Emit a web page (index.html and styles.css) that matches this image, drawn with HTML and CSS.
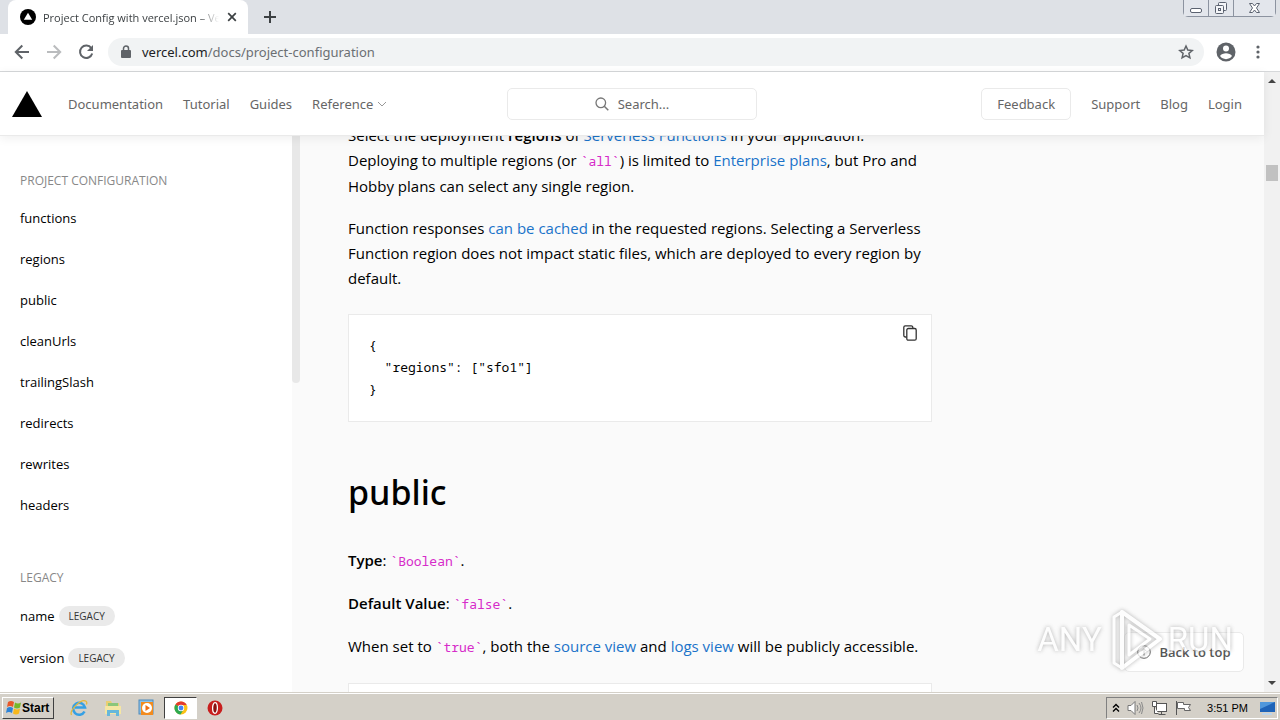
FILE: index.html
```html
<!DOCTYPE html>
<html lang="en">
<head>
<meta charset="utf-8">
<title>Project Config with vercel.json – Vercel</title>
<link rel="stylesheet" href="styles.css">
</head>
<body>
<div class="tabstrip">
  <div class="tab">
    <svg width="16" height="16" viewBox="0 0 16 16"><circle cx="8" cy="8" r="8"/><path d="M8 3.800l4.200 7H3.800z" fill="#fff"/></svg>
    <span class="tab-title">Project Config with vercel.json – Vercel</span>
    <button class="plain" aria-label="Close tab"><svg width="10" height="10" viewBox="0 0 10 10"><path d="M1.200 1.200l7.600 7.600M8.800 1.200L1.200 8.800" stroke="#3c4043" stroke-width="1.700"/></svg></button>
  </div>
  <button class="plain new-tab" aria-label="New tab"><svg width="12" height="12" viewBox="0 0 12 12"><path d="M6 0v12M0 6h12" stroke="#3c4043" stroke-width="2"/></svg></button>
  <div class="window-buttons">
    <button aria-label="Minimize"><svg width="24" height="16" viewBox="0 0 24 16"><rect x="6.500" y="8.500" width="11" height="4" rx="1.500" fill="#fff" stroke="#5b6270"/></svg></button>
    <button aria-label="Restore"><svg width="24" height="16" viewBox="0 0 24 16"><g fill="#f4f5f8" stroke="#5b6270"><rect x="9.500" y="2.500" width="8" height="8" rx="1"/><rect x="6.500" y="5.500" width="8" height="8" rx="1"/><rect x="9.500" y="8.500" width="2" height="2"/></g></svg></button>
    <button aria-label="Close"><svg width="41" height="16" viewBox="0 0 41 16"><path d="M15.500 3.500h3l2 2.500 2-2.500h3L22.500 8l3 4.500h-3l-2-2.500-2 2.500h-3l3-4.500z" fill="#fff" stroke="#5b6270"/></svg></button>
  </div>
</div>

<div class="toolbar">
  <div class="nav-buttons">
    <button class="plain" aria-label="Back"><svg width="16" height="16" viewBox="0 0 16 16"><path d="M15 8H2M8.300 1.500L1.800 8l6.500 6.500" fill="none" stroke="#5f6368" stroke-width="2"/></svg></button>
    <button class="plain" aria-label="Forward"><svg width="16" height="16" viewBox="0 0 16 16"><path d="M1 8h13M7.700 1.500L14.200 8l-6.500 6.500" fill="none" stroke="#babcbe" stroke-width="2"/></svg></button>
    <button class="plain" aria-label="Reload"><svg width="16" height="16" viewBox="0 0 16 16"><path d="M13.300 4.200A6.200 6.200 0 1 0 14.200 9.500" fill="none" stroke="#5f6368" stroke-width="2"/><path d="M15 1v6H9z" fill="#5f6368"/></svg></button>
  </div>
  <div class="address">
    <svg width="10" height="14" viewBox="0 0 10 14"><rect y="5" width="10" height="8" rx="1" fill="#5f6368"/><path d="M2.500 5.500V3.500a2.500 2.500 0 0 1 5 0v2" fill="none" stroke="#5f6368" stroke-width="1.500"/></svg>
    <span class="url">vercel.com<span class="path">/docs/project-configuration</span></span>
    <button class="plain" aria-label="Bookmark"><svg width="16" height="16" viewBox="0 0 16 16"><path d="M8 2l1.800 4.100 4.500.4-3.400 2.900 1 4.400L8 11.500l-3.900 2.300 1-4.400L1.700 6.500l4.500-.4z" fill="none" stroke="#5f6368" stroke-width="1.500"/></svg></button>
  </div>
  <button class="plain" aria-label="Profile"><svg width="20" height="20" viewBox="0 0 20 20"><circle cx="10" cy="10" r="9.500" fill="#5f6368"/><circle cx="10" cy="6.500" r="3" fill="#fff"/><path d="M4 14c1-2 3.700-2.800 6-2.800s5 .8 6 2.800a7.300 7.300 0 0 1-12 0z" fill="#fff"/></svg></button>
  <button class="plain menu" aria-label="Menu"><svg width="4" height="14" viewBox="0 0 4 14" fill="#5f6368"><circle cx="2" cy="2" r="1.600"/><circle cx="2" cy="7" r="1.600"/><circle cx="2" cy="12" r="1.600"/></svg></button>
</div>

<div class="viewport">
  <div class="page">
    <header class="site-header">
      <nav class="links">
        <a class="logo" href="#" aria-label="Home"><svg width="30" height="26" viewBox="0 0 30 26"><path d="M15 0l15 26H0z"/></svg></a>
        <a href="#">Documentation</a><a href="#">Tutorial</a><a href="#">Guides</a>
        <a class="drop" href="#">Reference <svg width="10" height="6" viewBox="0 0 10 6"><path d="M1 1l4 4 4-4" fill="none" stroke="#999"/></svg></a>
      </nav>
      <button class="search"><svg width="14" height="14" viewBox="0 0 14 14"><circle cx="5.800" cy="5.800" r="4.800" fill="none" stroke="#777" stroke-width="1.300"/><path d="M9.300 9.300l4 4" stroke="#777" stroke-width="1.500"/></svg>Search...</button>
      <nav class="links right">
        <button class="feedback">Feedback</button>
        <a href="#">Support</a><a href="#">Blog</a><a href="#">Login</a>
      </nav>
    </header>
    <div class="columns">
      <aside class="sidebar">
        <nav class="side-nav">
          <h2>PROJECT CONFIGURATION</h2>
          <a href="#">functions</a><a href="#">regions</a><a href="#">public</a><a href="#">cleanUrls</a><a href="#">trailingSlash</a><a href="#">redirects</a><a href="#">rewrites</a><a href="#">headers</a>
          <h2 class="second">LEGACY</h2>
          <a class="tagged" href="#">name <span class="tag">LEGACY</span></a>
          <a class="tagged" href="#">version <span class="tag">LEGACY</span></a>
        </nav>
        <div class="side-scroll"></div>
      </aside>
      <main class="article">
        <p>Select the deployment <b>regions</b> of <a href="#">Serverless Functions</a> in your application.<br>Deploying to multiple regions (or <code>`all`</code>) is limited to <a href="#">Enterprise plans</a>, but Pro and<br>Hobby plans can select any single region.</p>
        <p>Function responses <a href="#">can be cached</a> in the requested regions. Selecting a Serverless<br>Function region does not impact static files, which are deployed to every region by<br>default.</p>
        <div class="code-block">
          <pre>{
  "regions": ["sfo1"]
}</pre>
          <button class="plain" aria-label="Copy"><svg width="14" height="16" viewBox="0 0 14 16" fill="none" stroke="#333" stroke-width="1.300"><path d="M3.500 12H2.200A1.500 1.500 0 0 1 .8 10.500V2.200A1.500 1.500 0 0 1 2.200.8h6A1.500 1.500 0 0 1 9.800 2.200V3"/><rect x="3.800" y="3.500" width="9.400" height="11.700" rx="1.500"/></svg></button>
        </div>
        <h1>public</h1>
        <p><b>Type</b>: <code>`Boolean`</code>.</p>
        <p><b>Default Value</b>: <code>`false`</code>.</p>
        <p>When set to <code>`true`</code>, both the <a href="#">source view</a> and <a href="#">logs view</a> will be publicly accessible.</p>
        <div class="code-block"><pre>{
  "public": true
}</pre></div>
      </main>
    </div>
    <button class="to-top"><svg width="14" height="14" viewBox="0 0 14 14" fill="none" stroke="#666"><circle cx="7" cy="7" r="6.300"/><path d="M7 10.500V4M4.500 6.300L7 3.800l2.500 2.500"/></svg>Back to top</button>
    <div class="watermark"><span>ANY</span><svg width="58" height="64" viewBox="0 0 58 64" fill="none" stroke="#fff" stroke-width="4" stroke-linejoin="round"><path d="M16 4v56l38-29z"/><path d="M16 4L8 9v46l8 5M23 17v30l21-16z" stroke-width="3"/></svg><span>RUN</span></div>
  </div>
  <div class="scrollbar">
    <svg width="8" height="4" viewBox="0 0 8 4"><path d="M0 4l4-4 4 4z" fill="#444"/></svg>
    <div class="thumb"></div>
    <svg class="down" width="8" height="4" viewBox="0 0 8 4"><path d="M0 0l4 4 4-4z" fill="#444"/></svg>
  </div>
</div>

<footer class="taskbar">
  <button class="start"><svg width="17" height="16" viewBox="0 0 17 16"><path d="M3 2q3-2 6 0L8 7Q5 5 2 7z" fill="#e8582a"/><path d="M10 2.500q3 2 6 0L15 7.500q-3 2-6 0z" fill="#76b82a"/><path d="M2 8q3-2 6 0l-1 5q-3-2-6 0z" fill="#2c83d8"/><path d="M9 8.500q3 2 6 0l-1 5q-3 2-6 0z" fill="#f7b81c"/></svg>Start</button>
  <div class="apps">
    <button class="plain" aria-label="Internet Explorer"><svg width="18" height="18" viewBox="0 0 18 18" fill="none"><path d="M14.500 12.500A6 6 0 1 1 15 8.500H5" stroke="#35a0e4" stroke-width="2.600"/><path d="M1.500 16C-1 12 11-1 16 2.200c1.500 1 .5 3 .3 3.300" stroke="#e5b83b" stroke-width="1.300"/></svg></button>
    <button class="plain" aria-label="Explorer"><svg width="18" height="18" viewBox="0 0 18 18"><path d="M2 2h5l1 2h7v11H2z" fill="#e9cf72"/><path d="M4 4h10v5H4z" fill="#8bc67b"/><path d="M1 7h16v8H1z" fill="#f5e6a3"/><path d="M3 17v-6h12v6h-3v-3H6v3z" fill="#67b7db"/></svg></button>
    <button class="plain" aria-label="Media Player"><svg width="18" height="18" viewBox="0 0 18 18"><rect x="1" y="1" width="14" height="14" fill="#8ac1e8" stroke="#4c8abc"/><rect x="3" y="3" width="12" height="13" fill="#f28b1e"/><circle cx="9" cy="9" r="5" fill="#fff"/><path d="M7.500 6l4.500 3-4.500 3z" fill="#ed6f14"/></svg></button>
    <button class="plain active" aria-label="Chrome"><svg width="14" height="14" viewBox="0 0 14 14"><circle cx="7" cy="7" r="6.500" fill="#fbc116"/><path d="M7 7L1.400 3.600A6.500 6.500 0 0 1 12.700 4H7z" fill="#e33b2e"/><path d="M7 7L1.400 3.600A6.500 6.500 0 0 0 6.500 13.500L9.600 8.500z" fill="#2da94f"/><circle cx="7" cy="7" r="3.200" fill="#fff"/><circle cx="7" cy="7" r="2.400" fill="#4285f4"/></svg></button>
    <button class="plain" aria-label="Opera"><svg width="16" height="16" viewBox="0 0 16 16"><circle cx="8" cy="8" r="7.500" fill="#c81e1e"/><ellipse cx="8" cy="8" rx="2.400" ry="5.300" fill="#8a1010" stroke="#fff" stroke-width="1.300"/></svg></button>
  </div>
  <div class="tray">
    <svg width="8" height="10" viewBox="0 0 8 10"><path d="M1 4.500l3-3 3 3M1 8.500l3-3 3 3" fill="none" stroke="#000" stroke-width="1.400"/></svg>
    <svg width="17" height="16" viewBox="0 0 17 16"><path d="M1 5.500h3l4-4v13l-4-4H1z" fill="#fff" stroke="#777"/><path d="M10 5q2 3 0 6M12 3q4 5 0 10M14.500 2q3 6 0 12" fill="none" stroke="#888"/></svg>
    <svg width="17" height="16" viewBox="0 0 17 16" fill="#fff" stroke="#555"><rect x="5.500" y="3.500" width="10" height="8"/><path d="M7.500 14.500h7M10.500 12v2M1.500 1.500h4v5h-4zM3.500 7v6.500h4" /></svg>
    <svg width="17" height="16" viewBox="0 0 17 16"><path d="M1.500 1v14" stroke="#555"/><path d="M2.500 2.500h6v2h7l-2 3 2 3h-6v-2h-7z" fill="#fff" stroke="#666"/></svg>
    <time>3:51 PM</time>
    <svg width="16" height="14" viewBox="0 0 16 14"><path d="M1 1h15v10H1z" fill="#1e63b8"/><path d="M1 1h15L1 8z" fill="#4f97dc"/><path d="M3 12h10v2H3z" fill="#bdd5ea"/></svg>
  </div>
</footer>
</body>
</html>
```
FILE: styles.css
```css
* { box-sizing: border-box; }
body { margin: 0; height: 100vh; display: flex; flex-direction: column; overflow: hidden; font-family: "Open Sans", "Noto Sans", sans-serif; font-size: 13px; color: #000; background: #fff; }
a { color: inherit; text-decoration: none; }
button { font: inherit; color: inherit; }
svg { flex: none; }
.plain { display: flex; align-items: center; justify-content: center; border: 0; padding: 0; background: none; }

.tabstrip { flex: none; height: 34px; display: flex; align-items: flex-start; padding-left: 8px; background: #dee1e6; }
.tab { display: flex; align-items: center; width: 240px; height: 34px; padding: 0 11px 0 12px; border-radius: 8px 8px 0 0; background: #fff; }
.tab-title { flex: 1; min-width: 0; margin: 0 8px 0 7px; overflow: hidden; white-space: nowrap; font-size: 11px; color: #3c4043; mask-image: linear-gradient(to right, #000 88%, transparent); }
.new-tab { height: 34px; width: 44px; }
.window-buttons { display: flex; margin: 0 4px 0 auto; border: 1px solid #8c93a0; border-top: 0; border-radius: 0 0 5px 5px; }
.window-buttons button { display: flex; padding: 0; border: 0; background: #e3e6ec; }
.window-buttons button + button { border-left: 1px solid #8c93a0; }

.toolbar { flex: none; height: 38px; display: flex; align-items: center; padding: 0 20px 2px 14px; border-bottom: 1px solid #d6d8da; background: #fff; }
.nav-buttons { display: flex; gap: 16px; margin-right: 14px; }
.address { flex: 1; height: 28px; display: flex; align-items: center; padding: 0 10px 0 13px; margin-right: 12px; border-radius: 14px; background: #f1f3f4; }
.url { flex: 1; margin-left: 11px; font-family: "Noto Sans", sans-serif; font-size: 13px; color: #202124; }
.path { color: #6b6f73; }
.menu { margin-left: 20px; }

.viewport { flex: 1; min-height: 0; display: flex; }
.page { position: relative; flex: 1; min-width: 0; display: flex; flex-direction: column; background: #fafafa; }
.site-header { position: relative; flex: none; height: 64px; display: flex; align-items: center; justify-content: space-between; padding: 0 22px 0 12px; background: #fff; border-bottom: 1px solid #eaeaea; box-shadow: 0 2px 10px rgba(0, 0, 0, .07); color: #666; font-family: "Noto Sans", sans-serif; }
.links { flex: 1; display: flex; align-items: center; gap: 20px; }
.logo { display: flex; margin-right: 6px; }
.drop { display: flex; align-items: center; gap: 4px; }
.right { justify-content: flex-end; margin-left: -10px; }
.search { flex: none; width: 250px; height: 32px; display: flex; align-items: center; justify-content: center; gap: 9px; padding: 0; border: 1px solid #eaeaea; border-radius: 5px; background: #fff; }
.feedback { width: 90px; height: 32px; padding: 0; border: 1px solid #eaeaea; border-radius: 5px; background: #fff; }

.columns { flex: 1; min-height: 0; display: flex; overflow: hidden; }
.sidebar { flex: none; width: 300px; display: flex; }
.side-nav { flex: 1; display: flex; flex-direction: column; padding: 34px 20px 0; background: #fff; }
.side-nav h2 { margin: 0 0 16px; font-size: 12px; line-height: 22px; font-weight: 400; color: #888; }
.side-nav a { margin-bottom: 21px; line-height: 20px; }
.side-nav .second { margin: 31px 0 17px; }
.side-nav .tagged { display: flex; align-items: center; gap: 4px; margin-bottom: 22px; }
.tag { padding: 0 10px; border-radius: 10px; background: #eaeaea; color: #333; font-size: 10px; line-height: 20px; }
.side-scroll { width: 8px; height: 247px; border-radius: 0 0 4px 4px; background: #e8e8e8; }

.article { flex: none; width: 584px; margin: -13px 0 0 48px; font-size: 15px; }
.article p { margin: 0 0 17px; line-height: 25px; white-space: nowrap; }
.article a { color: #1a73c9; }
.article b { font-weight: 600; }
code, pre { font-family: "Noto Sans Mono", "DejaVu Sans Mono", monospace; font-size: 13px; }
code { color: #d62bc9; }
.code-block { display: flex; align-items: flex-start; justify-content: space-between; margin: 23px 0 48px; padding: 10px 14px 11px 20px; border: 1px solid #eaeaea; background: #fff; }
.code-block pre { margin: 9px 0 10px; line-height: 22px; }
.article h1 { margin: 0 0 34px; font-family: "Noto Sans", sans-serif; font-size: 34px; line-height: 44px; font-weight: 500; }

.to-top { position: absolute; right: 20px; bottom: 20px; width: 120px; height: 40px; display: flex; align-items: center; justify-content: center; gap: 8px; padding: 0; border: 1px solid #eaeaea; border-radius: 5px; background: #fff; color: #555; font-weight: 600; }
.watermark { position: absolute; right: 31px; bottom: 20px; display: flex; align-items: center; gap: 4px; color: #fff; font-family: Roboto, sans-serif; font-size: 33px; line-height: 64px; opacity: .75; filter: drop-shadow(0 0 2px #999); pointer-events: none; }

.scrollbar { flex: none; width: 16px; display: flex; flex-direction: column; align-items: center; padding: 7px 0; background: #f1f1f1; }
.thumb { width: 12px; height: 16px; margin-top: 82px; background: #c1c1c1; }
.down { margin-top: auto; }

.taskbar { flex: none; height: 28px; display: flex; align-items: center; padding: 2px 2px 0; border-top: 1px solid #d4d0c8; background: #d4d0c8; box-shadow: inset 0 1px #fff; }
.start { display: flex; align-items: center; gap: 0; height: 22px; width: 52px; padding: 0 2px; border: 1px solid; border-color: #fff #404040 #404040 #fff; background: #d4d0c8; font-family: "Liberation Sans", sans-serif; font-size: 12px; font-weight: 700; }
.apps { display: flex; align-items: center; gap: 1px; margin-left: 8px; }
.apps button { width: 33px; height: 22px; }
.apps .active { border: 1px solid; border-color: #404040 #fff #fff #404040; background: #fff; }
.tray { display: flex; align-items: center; gap: 7px; height: 22px; margin-left: auto; padding: 0 2px 0 5px; border: 1px solid; border-color: #808080 #fff #fff #808080; }
.tray time { margin: 0 4px 0 8px; font-family: "Liberation Sans", sans-serif; font-size: 11px; white-space: nowrap; }
```
